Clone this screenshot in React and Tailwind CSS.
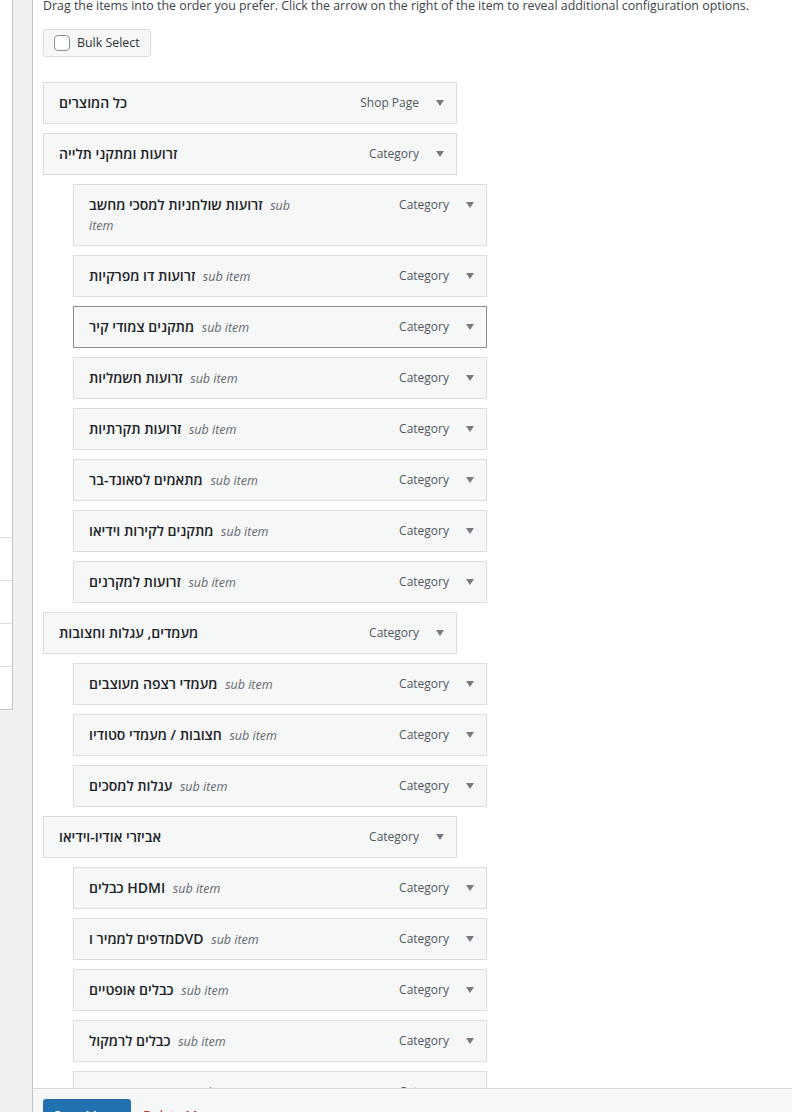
import React from "react";

const items = [
  { title: "כל המוצרים", type: "Shop Page" },
  { title: "זרועות ומתקני תלייה", type: "Category" },
  { title: "זרועות שולחניות למסכי מחשב", type: "Category", sub: true },
  { title: "זרועות דו מפרקיות", type: "Category", sub: true },
  { title: "מתקנים צמודי קיר", type: "Category", sub: true, active: true },
  { title: "זרועות חשמליות", type: "Category", sub: true },
  { title: "זרועות תקרתיות", type: "Category", sub: true },
  { title: "מתאמים לסאונד-בר", type: "Category", sub: true },
  { title: "מתקנים לקירות וידיאו", type: "Category", sub: true },
  { title: "זרועות למקרנים", type: "Category", sub: true },
  { title: "מעמדים, עגלות וחצובות", type: "Category" },
  { title: "מעמדי רצפה מעוצבים", type: "Category", sub: true },
  { title: "חצובות / מעמדי סטודיו", type: "Category", sub: true },
  { title: "עגלות למסכים", type: "Category", sub: true },
  { title: "אביזרי אודיו-וידיאו", type: "Category" },
  { title: "כבלים HDMI", type: "Category", sub: true },
  { title: "מדפים לממיר וDVD", type: "Category", sub: true },
  { title: "כבלים אופטיים", type: "Category", sub: true },
  { title: "כבלים לרמקול", type: "Category", sub: true },
  { title: "מתאמים וממירים", type: "Category", sub: true },
];

function Arrow() {
  return (
    <svg width="8" height="6" viewBox="0 0 8 6" className="block">
      <path d="M0 0 H8 L4 6 Z" fill="#787c82" />
    </svg>
  );
}

function MenuItem({ item }) {
  return (
    <div className={item.sub ? "pl-[30px]" : ""}>
      <div
        className={`w-[414px] flex items-start bg-[#f6f7f7] border pl-[15px] pr-[12px] py-[10px] ${
          item.active ? "border-[#8c8f94]" : "border-[#dcdcde]"
        }`}
      >
        <div className="w-[212px] text-[14px] leading-[20px]">
          <span className="font-semibold text-[#1d2327]">{item.title}</span>
          {item.sub && (
            <>
              {" "}
              <span className="italic text-[12.5px] leading-none text-[#646970] ml-[4px]">sub item</span>
            </>
          )}
        </div>
        <div className="ml-auto h-[20px] flex items-center gap-[17px]">
          <span className="text-[12px] leading-none text-[#50575e]">{item.type}</span>
          <Arrow />
        </div>
      </div>
    </div>
  );
}

export default function App() {
  return (
    <div
      className="h-[1112px] w-[792px] overflow-hidden flex bg-[#f0f0f1] text-[#3c434a]"
      style={{ fontFamily: '"Segoe UI", "Open Sans", "Liberation Sans", sans-serif' }}
    >
      <div className="w-[13px] h-[710px] shrink-0 flex flex-col bg-white border-r border-b border-[#c3c4c7]">
        <div className="h-[538px] border-b border-[#dcdcde]" />
        <div className="h-[43px] border-b border-[#dcdcde]" />
        <div className="h-[43px] border-b border-[#dcdcde]" />
        <div className="h-[43px] border-b border-[#dcdcde]" />
        <div className="flex-1" />
      </div>

      <div className="ml-[19px] flex-1 flex flex-col bg-white border-l border-[#c3c4c7] min-w-0">
        <div className="flex-1 overflow-hidden pl-[10px]">
          <p className="mt-[-4px] text-[12.4px] leading-[20px] whitespace-nowrap">
            Drag the items into the order you prefer. Click the arrow on the right of the item to reveal additional configuration options.
          </p>
          <div className="mt-[13px] inline-flex items-center gap-[7px] h-[28px] pl-[10px] pr-[10px] bg-[#f6f7f7] border border-[#dcdcde] rounded-[3px]">
            <span className="w-[16px] h-[16px] bg-white border border-[#8c8f94] rounded-[4px]" />
            <span className="text-[12.4px] text-[#2c3338]">Bulk Select</span>
          </div>
          <div className="mt-[25px] flex flex-col gap-[9px] pb-[20px]">
            {items.map((item, idx) => (
              <MenuItem key={idx} item={item} />
            ))}
          </div>
        </div>
        <div className="h-[24px] shrink-0 bg-[#f6f7f7] border-t border-[#dcdcde] pl-[10px] pt-[10px] flex items-start gap-[12px]">
          <button className="w-[88px] h-[32px] bg-[#2271b1] text-white text-[13px] rounded-[3px] leading-[30px]">
            Save Menu
          </button>
          <a className="text-[13px] text-[#b32d2e] underline leading-[32px]">Delete Menu</a>
        </div>
      </div>
    </div>
  );
}
